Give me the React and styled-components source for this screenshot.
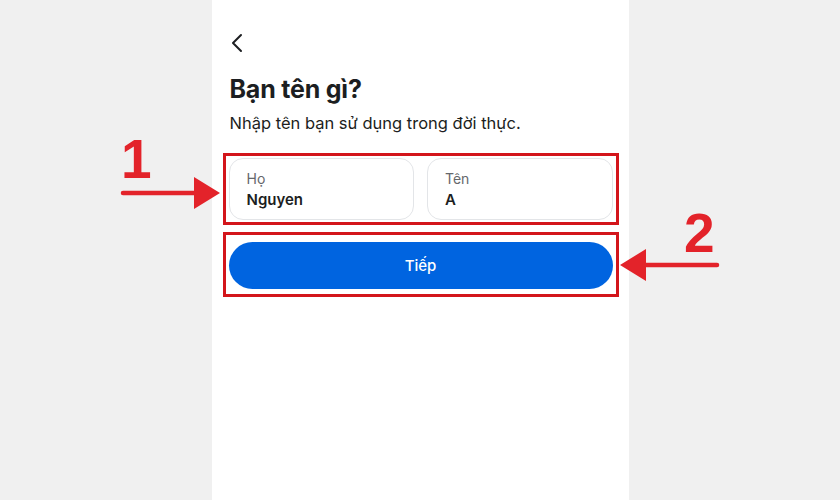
import React, { useState } from 'react';
import styled, { createGlobalStyle } from 'styled-components';

const GlobalStyle = createGlobalStyle`
  * { box-sizing: border-box; }
  html, body { margin: 0; padding: 0; }
  body {
    font-family: Inter, "Noto Sans", "Liberation Sans", sans-serif;
    background: #f0f0f0;
  }
`;

const ChevronLeft = () => (
  <svg width="14" height="20" viewBox="0 0 14 20" fill="none">
    <path d="M11 2 L3 10 L11 18" stroke="#1c1e21" strokeWidth="2" strokeLinecap="round" strokeLinejoin="round" />
  </svg>
);

const App = () => {
  const [form, setForm] = useState({ lastName: 'Nguyen', firstName: 'A' });

  const handleChange = (e) => {
    const { name, value } = e.target;
    setForm(prev => ({ ...prev, [name]: value }));
  };

  return (
    <>
      <GlobalStyle />
      <Page>
        <Phone>
          <BackButton aria-label="Quay lại">
            <ChevronLeft />
          </BackButton>
          <Title>Bạn tên gì?</Title>
          <Subtitle>Nhập tên bạn sử dụng trong đời thực.</Subtitle>

          <Highlight>
            <FieldRow>
              <Field>
                <FieldLabel>Họ</FieldLabel>
                <FieldInput name="lastName" value={form.lastName} onChange={handleChange} />
              </Field>
              <Field>
                <FieldLabel>Tên</FieldLabel>
                <FieldInput name="firstName" value={form.firstName} onChange={handleChange} />
              </Field>
            </FieldRow>
          </Highlight>

          <Highlight $button>
            <NextButton>Tiếp</NextButton>
          </Highlight>
        </Phone>

        <StepNumber $left={121} $top={129}>1</StepNumber>
        <Arrow $left={120} $top={176} width="102" height="34" viewBox="0 0 102 34">
          <path d="M3 17 H76" stroke="#e3232a" strokeWidth="4.5" strokeLinecap="round" />
          <path d="M74 1 L100 17 L74 33 Z" fill="#e3232a" />
        </Arrow>

        <StepNumber $left={684} $top={203}>2</StepNumber>
        <Arrow $left={618} $top={248} width="102" height="34" viewBox="0 0 102 34">
          <path d="M99 17 H26" stroke="#e3232a" strokeWidth="4.5" strokeLinecap="round" />
          <path d="M28 1 L2 17 L28 33 Z" fill="#e3232a" />
        </Arrow>
      </Page>
    </>
  );
};

const Page = styled.div`
  position: relative;
  width: 840px;
  height: 500px;
  display: flex;
  justify-content: center;
  background: #f0f0f0;
  overflow: hidden;
`;

const Phone = styled.div`
  width: 417px;
  height: 100%;
  background: #ffffff;
  padding: 33px 10px 0 11px;
  display: flex;
  flex-direction: column;
`;

const BackButton = styled.button`
  align-self: flex-start;
  margin-left: 7px;
  padding: 0;
  border: none;
  background: none;
  width: 14px;
  height: 20px;
  display: flex;
  cursor: pointer;
`;

const Title = styled.h1`
  margin: 20px 0 0 7px;
  font-size: 25px;
  line-height: 32px;
  font-weight: 650;
  color: #1c1e21;
  letter-spacing: -0.2px;
`;

const Subtitle = styled.p`
  margin: 8px 0 0 7px;
  font-size: 16.5px;
  line-height: 20px;
  color: #1c1e21;
`;

const Highlight = styled.div`
  margin-top: ${p => (p.$button ? '7px' : '20px')};
  border: 3px solid #d3151b;
  padding: ${p => (p.$button ? '7px 3px 5px' : '2px 3px')};
`;

const FieldRow = styled.div`
  display: grid;
  grid-template-columns: 1fr 1fr;
  gap: 13px;
`;

const Field = styled.label`
  height: 62px;
  border: 1px solid #e3e5e8;
  border-radius: 14px;
  padding: 11px 17px 0;
  display: flex;
  flex-direction: column;
  background: #fff;
`;

const FieldLabel = styled.span`
  font-size: 14px;
  line-height: 18px;
  color: #65676b;
`;

const FieldInput = styled.input`
  border: none;
  outline: none;
  padding: 0;
  margin-top: 2px;
  font-family: inherit;
  font-size: 15px;
  line-height: 20px;
  font-weight: 600;
  color: #1c1e21;
  background: transparent;
  width: 100%;
`;

const NextButton = styled.button`
  width: 100%;
  height: 47px;
  border: none;
  border-radius: 24px;
  background: #0064e0;
  color: #ffffff;
  font-family: inherit;
  font-size: 15px;
  font-weight: 500;
  cursor: pointer;
`;

const StepNumber = styled.span`
  position: absolute;
  left: ${p => p.$left}px;
  top: ${p => p.$top}px;
  font-family: "Liberation Sans", Arial, sans-serif;
  font-size: 55px;
  line-height: 60px;
  font-weight: 700;
  color: #e3232a;
`;

const Arrow = styled.svg`
  position: absolute;
  left: ${p => p.$left}px;
  top: ${p => p.$top}px;
`;

export default App;
